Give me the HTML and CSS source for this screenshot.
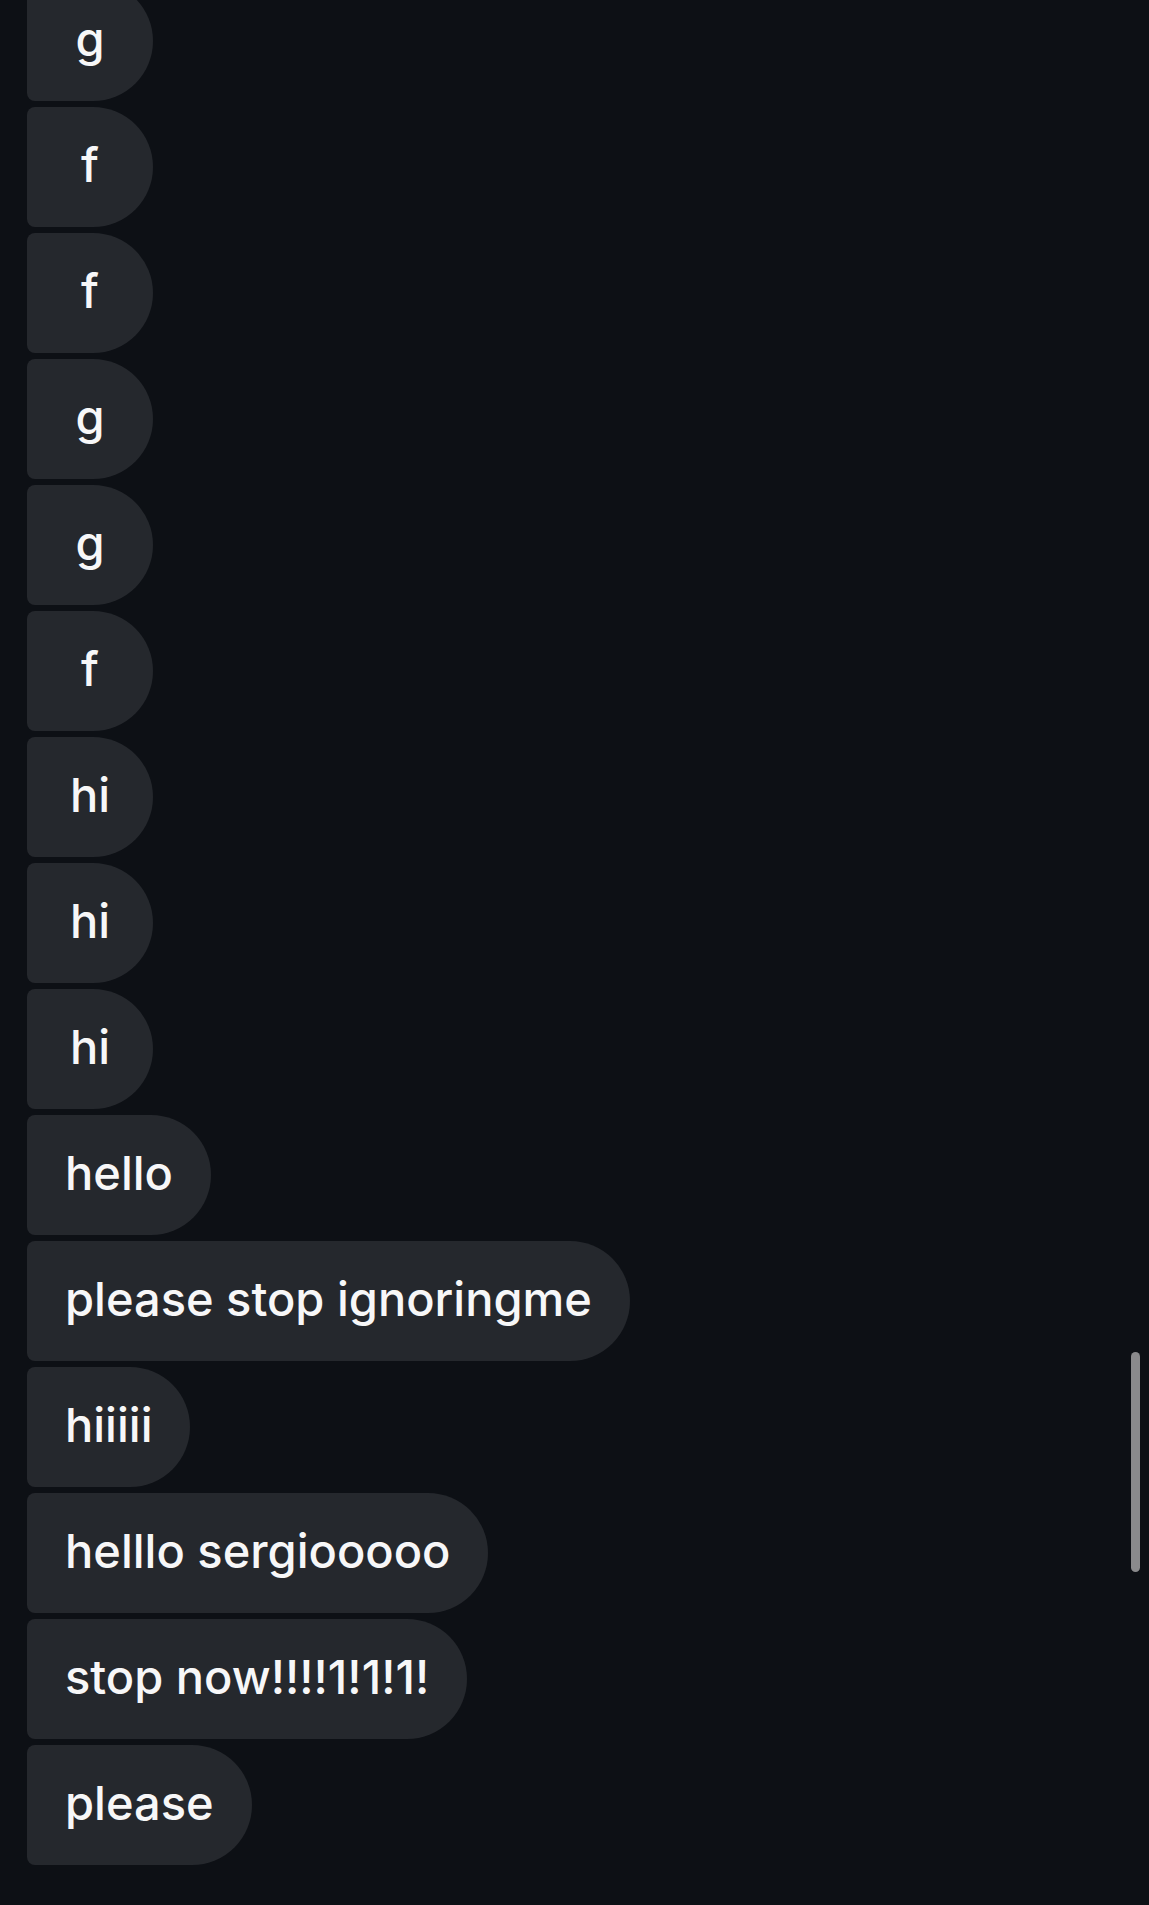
FILE: index.html
```html
<!DOCTYPE html>
<html>
<head>
<meta charset="utf-8">
<link rel="stylesheet" href="styles.css">
</head>
<body>
<div class="chat">
  <div class="bubble">g</div>
  <div class="bubble">f</div>
  <div class="bubble">f</div>
  <div class="bubble">g</div>
  <div class="bubble">g</div>
  <div class="bubble">f</div>
  <div class="bubble">hi</div>
  <div class="bubble">hi</div>
  <div class="bubble">hi</div>
  <div class="bubble">hello</div>
  <div class="bubble">please stop ignoringme</div>
  <div class="bubble">hiiiii</div>
  <div class="bubble">helllo sergiooooo</div>
  <div class="bubble">stop now!!!!1!1!1!</div>
  <div class="bubble">please</div>
</div>
<div class="scroll-thumb"></div>
</body>
</html>
```
FILE: styles.css
```css
html, body {
  margin: 0;
  padding: 0;
  height: 100%;
  overflow: hidden;
  background: #0d1015;
}
body {
  font-family: Inter, "Noto Sans", sans-serif;
  color: #f7f7f8;
}
.chat {
  display: flex;
  flex-direction: column;
  align-items: flex-start;
  gap: 6px;
  margin-top: -19px;
  padding-left: 27px;
}
.bubble {
  display: flex;
  align-items: center;
  justify-content: center;
  box-sizing: border-box;
  height: 120px;
  min-width: 126px;
  padding: 0 38px 6px;
  background: #25282d;
  border-radius: 8px 60px 60px 8px;
  font-size: 47px;
  font-weight: 500;
  letter-spacing: 0;
  white-space: nowrap;
}
.scroll-thumb {
  position: fixed;
  left: 1131px;
  top: 1352px;
  width: 9px;
  height: 220px;
  border-radius: 5px;
  background: #8a8a8c;
}
```
